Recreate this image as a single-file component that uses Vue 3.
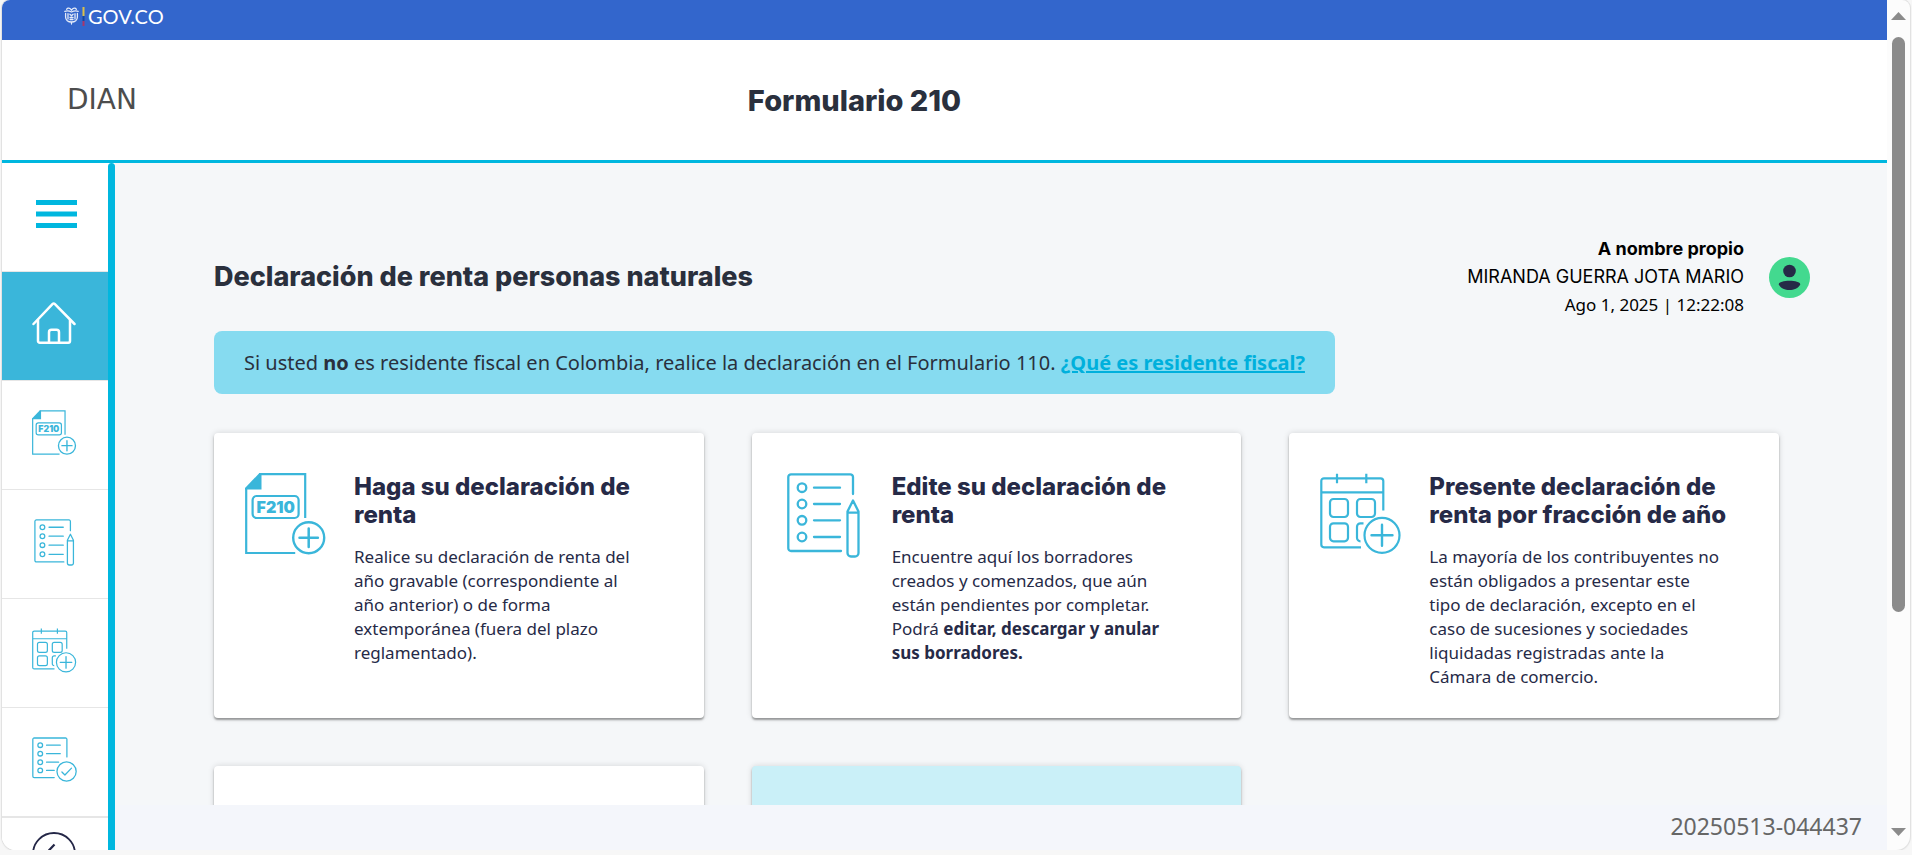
<script setup>
const navItems = [
  { icon: 'form', label: 'Haga su declaración de renta' },
  { icon: 'edit', label: 'Edite su declaración de renta' },
  { icon: 'calendar', label: 'Presente declaración de renta por fracción de año' },
  { icon: 'check', label: 'Declaraciones presentadas' },
]

const cards = [
  {
    icon: 'form',
    title: 'Haga su declaración de\nrenta',
    text: 'Realice su declaración de renta del\naño gravable (correspondiente al\naño anterior) o de forma\nextemporánea (fuera del plazo\nreglamentado).',
    strong: [],
  },
  {
    icon: 'edit',
    title: 'Edite su declaración de\nrenta',
    text: 'Encuentre aquí los borradores\ncreados y comenzados, que aún\nestán pendientes por completar.\nPodrá ',
    strong: ['editar, descargar y anular', 'sus borradores.'],
  },
  {
    icon: 'calendar',
    title: 'Presente declaración de\nrenta por fracción de año',
    text: 'La mayoría de los contribuyentes no\nestán obligados a presentar este\ntipo de declaración, excepto en el\ncaso de sucesiones y sociedades\nliquidadas registradas ante la\nCámara de comercio.',
    strong: [],
  },
]
</script>

<template>
  <div class="window">
    <svg class="sprite" aria-hidden="true">
      <symbol id="icon-form" viewBox="0 0 82 85">
        <path d="M0 15 14 0.5h2.5v16H0z" fill="currentColor" />
        <path d="M14 1.2h46.2V45M1.2 15v65h49" fill="none" stroke="currentColor" stroke-width="2.2" />
        <rect x="7.6" y="23" width="46" height="22" rx="4" fill="none" stroke="currentColor" stroke-width="2.2" />
        <text x="30.7" y="39.8" text-anchor="middle" font-family="Inter, sans-serif" font-weight="900" font-size="16" fill="currentColor">F210</text>
        <circle cx="63.7" cy="64.7" r="15.5" fill="none" stroke="currentColor" stroke-width="2.4" />
        <path d="M54.5 64.7h18.4M63.7 55.5v18.4" fill="none" stroke="currentColor" stroke-width="2.5" stroke-linecap="round" />
      </symbol>
      <symbol id="icon-edit" viewBox="0 0 82 85">
        <g fill="none" stroke="currentColor" stroke-width="2.3" stroke-linecap="round" stroke-linejoin="round">
          <path d="M70 21V4a2.700 2.700 0 0 0-2.700-2.700H8A2.700 2.700 0 0 0 5.300 4v71.300A2.700 2.700 0 0 0 8 78h50" />
          <circle cx="19" cy="14.700" r="4.300" />
          <circle cx="19" cy="31" r="4.300" />
          <circle cx="19" cy="47.300" r="4.300" />
          <circle cx="19" cy="64" r="4.300" />
          <path d="M31 14.700h26M31 31h26M31 47.300h26M31 64h26" />
          <path d="M64.500 38.500 70 27.500l5.500 11V80a3.500 3.500 0 0 1-3.500 3.500h-4a3.500 3.500 0 0 1-3.500-3.500zM64.500 39.700h11" />
        </g>
      </symbol>
      <symbol id="icon-calendar" viewBox="0 0 82 85">
        <g fill="none" stroke="currentColor" stroke-width="2.2" stroke-linecap="butt" stroke-linejoin="round">
          <path d="M63.300 37.500V8a2.700 2.700 0 0 0-2.700-2.700H4A2.700 2.700 0 0 0 1.300 8v63.600A2.700 2.700 0 0 0 4 74.300h37M1.300 19.300h62M17 .7v9.600M46.300.7v9.600" />
          <rect x="10" y="26" width="18" height="18" rx="3.500" />
          <rect x="37" y="26" width="18" height="18" rx="3.500" />
          <rect x="10" y="50.300" width="18" height="18" rx="3.500" />
          <path d="M43.500 50.300h-3a3.500 3.500 0 0 0-3.500 3.500v11a3.500 3.500 0 0 0 3.500 3.500" />
          <circle cx="62" cy="62.300" r="17.500" />
          <path d="M51.500 62.300h21M62 51.800v21" stroke-width="2.400" stroke-linecap="round" />
        </g>
      </symbol>
      <symbol id="icon-check" viewBox="0 0 82 85">
        <g fill="none" stroke="currentColor" stroke-width="2.300" stroke-linecap="round" stroke-linejoin="round">
          <path d="M63.600 36V4a2.500 2.500 0 0 0-2.500-2.500H4A2.500 2.500 0 0 0 1.500 4v67A2.500 2.500 0 0 0 4 73.500h36.500" />
          <circle cx="15" cy="14.500" r="4.300" />
          <circle cx="15" cy="30" r="4.300" />
          <circle cx="15" cy="45.500" r="4.300" />
          <circle cx="15" cy="60.500" r="4.300" />
          <path d="M26.500 14.500h25M26.500 30h25M26.500 45.500h22M26.500 60.500h14" />
          <circle cx="63" cy="62.500" r="17.500" />
          <path d="m54.500 63.500 5.500 5.500 12-12.500" />
        </g>
      </symbol>
    </svg>

    <div class="page">
      <div class="gov-bar">
        <a class="gov-logo" href="#" aria-label="GOV.CO">
          <svg width="24" height="20" viewBox="0 0 24 20" aria-hidden="true">
            <g fill="none" stroke="#e4ebf9" stroke-width="1.3" stroke-linecap="round" stroke-linejoin="round">
              <path d="M7.500 4.200C6 1.800 3.600 1.600 2.600 3.300M7.500 4.200c1.500-2.400 3.900-2.600 4.900-.9" />
              <path d="M.8 5.300c2.200-.6 4.500-.4 6.700.7 2.200-1.100 4.500-1.300 6.700-.7" />
              <path d="M1.600 7.500v3.600c0 2.900 2.400 4.900 5.900 4.900s5.900-2 5.900-4.900V7.500" />
              <path d="M4 7.700v5.400M11 7.700v5.400M5.900 8.300l1.600 1.500 1.600-1.500M6 11.500h3M6 13.500h3M7.500 16.300v1.700" />
            </g>
            <path d="M19.500 1v9" stroke="#d9c04a" stroke-width="2" />
            <path d="M19.500 10v5" stroke="#16489e" stroke-width="2" />
            <path d="M19.500 15v5" stroke="#a8366a" stroke-width="2" />
          </svg>
          <span>GOV.CO</span>
        </a>
      </div>

      <header class="header">
        <a class="dian" href="#">DIAN</a>
        <h1>Formulario 210</h1>
      </header>

      <div class="body">
        <nav class="sidebar" aria-label="Menú principal">
          <button class="nav-item menu" type="button" aria-label="Menú">
            <svg width="41" height="28" viewBox="0 0 41 28" aria-hidden="true">
              <path d="M0 2.500h41M0 14h41M0 25.500h41" stroke="currentColor" stroke-width="4.800" />
            </svg>
          </button>
          <a class="nav-item active" href="#" aria-label="Inicio" aria-current="page">
            <svg width="44" height="42" viewBox="0 0 44 42" aria-hidden="true">
              <g fill="none" stroke="currentColor" stroke-width="2.500" stroke-linecap="round" stroke-linejoin="round">
                <path d="M1.500 22 20.700 1.900a1.400 1.400 0 0 1 2 0L42.500 22" />
                <path d="M6 18v21a1.700 1.700 0 0 0 1.700 1.700h28.600A1.700 1.700 0 0 0 38 39V18" />
                <path d="M17 40.500V30.200a2.500 2.500 0 0 1 2.500-2.500h5a2.500 2.500 0 0 1 2.500 2.500v10.300" />
              </g>
            </svg>
          </a>
          <a v-for="item in navItems" :key="item.icon" class="nav-item" href="#" :aria-label="item.label">
            <svg class="nav-icon" aria-hidden="true"><use :href="'#icon-' + item.icon" /></svg>
          </a>
          <button class="nav-back" type="button" aria-label="Volver">
            <svg width="44" height="44" viewBox="0 0 44 44" aria-hidden="true">
              <g fill="none" stroke="currentColor" stroke-width="1.800">
                <circle cx="22" cy="22" r="21" />
                <path d="m22.500 12.500-9 9.500 9 9.500" stroke-width="2.200" />
              </g>
            </svg>
          </button>
        </nav>
        <div class="strip"></div>

        <div class="content">
          <main class="scroll">
            <div class="top">
              <h2>Declaración de renta personas naturales</h2>
              <div class="user">
                <div class="user-text">
                  <strong>A nombre propio</strong>
                  <span>MIRANDA GUERRA JOTA MARIO</span>
                  <span class="date">Ago 1, 2025 | 12:22:08</span>
                </div>
                <svg width="41" height="41" viewBox="0 0 41 41" aria-hidden="true">
                  <circle cx="20.500" cy="20.500" r="20.500" fill="#43d98f" />
                  <circle cx="20.500" cy="14" r="6.300" fill="#262a47" />
                  <path d="M9.700 27.500c0-5 21.600-5 21.600 0-4 7.400-17.600 7.400-21.600 0z" fill="#262a47" />
                </svg>
              </div>
            </div>

            <p class="notice">
              Si usted <strong>no</strong> es residente fiscal en Colombia, realice la declaración en el Formulario 110.
              <a href="#">¿Qué es residente fiscal?</a>
            </p>

            <div class="cards">
              <article v-for="card in cards" :key="card.icon" class="card">
                <svg class="card-icon" aria-hidden="true"><use :href="'#icon-' + card.icon" /></svg>
                <div class="card-body">
                  <h3>{{ card.title }}</h3>
                  <p>{{ card.text }}<template v-for="(line, i) in card.strong" :key="line">{{ i ? '\n' : '' }}<strong>{{ line }}</strong></template></p>
                </div>
              </article>
              <article class="card"></article>
              <article class="card tinted"></article>
            </div>
          </main>
          <footer class="footer">20250513-044437</footer>
        </div>
      </div>
    </div>

    <div class="scrollbar" aria-hidden="true">
      <svg width="15" height="8" viewBox="0 0 15 8"><path d="M0 8 7.500 0 15 8z" fill="#8b8b8b" /></svg>
      <div class="track"><div class="thumb"></div></div>
      <svg width="15" height="8" viewBox="0 0 15 8"><path d="M0 0h15L7.500 8z" fill="#8b8b8b" /></svg>
    </div>
  </div>
</template>

<style>
body {
  background: #f7f7f7;
}
</style>

<style scoped>
.window {
  box-sizing: border-box;
  display: flex;
  height: calc(100vh - 5px);
  margin: 0 2px;
  overflow: hidden;
  border-radius: 8px 8px 14px 14px;
  background: #fcfcfc;
  box-shadow: 0 0 0 1px #e2e2e2, 0 1px 2px #d4d4d4;
  font-family: 'Noto Sans', 'Open Sans', sans-serif;
  color: #262a47;
}

.sprite {
  display: none;
}

.page {
  flex: 1;
  min-width: 0;
  display: flex;
  flex-direction: column;
  background: #fff;
}

.gov-bar {
  flex: none;
  display: flex;
  height: 40px;
  padding-left: 62px;
  background: #3366cc;
}

.gov-logo {
  display: flex;
  align-items: center;
  height: 32px;
  color: #fff;
  font-family: Lato, sans-serif;
  font-size: 20px;
  text-decoration: none;
}

.header {
  flex: none;
  display: grid;
  grid-template-columns: 240px 1fr 420px;
  align-items: center;
  height: 120px;
  border-bottom: 3px solid #00b7df;
}

.dian {
  padding-left: 65px;
  color: #4d4d4d;
  font-family: 'DejaVu Sans', sans-serif;
  font-size: 28px;
  line-height: 32px;
  text-decoration: none;
}

h1 {
  margin: 0;
  padding-top: 2px;
  color: #2a303d;
  font-family: Inter, sans-serif;
  font-size: 29px;
  font-weight: 800;
  line-height: 36px;
  text-align: center;
}

.body {
  flex: 1;
  min-height: 0;
  display: flex;
}

.sidebar {
  flex: none;
  width: 106px;
  overflow: hidden;
}

.nav-item {
  box-sizing: border-box;
  display: flex;
  align-items: center;
  justify-content: center;
  width: 100%;
  height: 109px;
  padding: 0 2px 4px 0;
  border: 0;
  border-bottom: 1px solid #e6e6e6;
  background: #fff;
  color: #3ab6da;
}

.nav-item.menu {
  padding: 0 0 6px 3px;
  color: #00b7df;
}

.nav-item.active {
  padding-bottom: 7px;
  background: #3ab6da;
  color: #fff;
}

.nav-icon {
  width: 45px;
  height: 47px;
}

.nav-back {
  display: flex;
  justify-content: center;
  width: 100%;
  padding: 14px 2px 14px 0;
  border: 0;
  border-top: 1px solid #e6e6e6;
  background: #fff;
  color: #242747;
}

.strip {
  flex: none;
  width: 7px;
  border-radius: 4px 4px 0 0;
  background: #00b7df;
}

.content {
  flex: 1;
  min-width: 0;
  display: flex;
  flex-direction: column;
  background: #f5f7f9;
}

.scroll {
  flex: 1;
  min-height: 0;
  padding: 72px 108px 0 99px;
  overflow: hidden;
}

.top {
  display: flex;
  align-items: center;
  justify-content: space-between;
  margin-right: -31px;
}

h2 {
  margin: 0;
  color: #2a303d;
  font-family: Inter, sans-serif;
  font-size: 27px;
  font-weight: 800;
  line-height: 36px;
}

.user {
  display: flex;
  align-items: center;
  gap: 25px;
  color: #000;
}

.user-text {
  display: flex;
  flex-direction: column;
  align-items: flex-end;
  font-family: Inter, sans-serif;
  font-size: 18px;
  line-height: 28px;
}

.date {
  font-family: 'Noto Sans', sans-serif;
  font-size: 17px;
}

.notice {
  width: fit-content;
  margin: 12px 0 0;
  padding: 17px 30px 16px;
  border-radius: 8px;
  background: #86dbf0;
  color: #2a303d;
  font-size: 20px;
  line-height: 30px;
}

.notice a {
  color: #00b0dc;
  font-weight: 700;
  text-decoration-thickness: 2px;
}

.cards {
  display: grid;
  grid-template-columns: repeat(3, 1fr);
  gap: 48px;
  margin-top: 39px;
}

.card {
  box-sizing: border-box;
  display: flex;
  gap: 27px;
  min-height: 285px;
  padding: 40px 30px 28px 31px;
  border-radius: 4px;
  background: #fff;
  box-shadow: 0 2px 2px rgba(0, 0, 0, 0.35), 0 0 6px rgba(0, 0, 0, 0.14);
}

.card.tinted {
  background: #caf0f8;
}

.card-icon {
  flex: none;
  width: 82px;
  height: 85px;
  color: #3ab6da;
}

.card-body {
  white-space: pre-line;
}

h3 {
  margin: 0 0 16px;
  font-family: Inter, sans-serif;
  font-size: 24px;
  font-weight: 800;
  line-height: 28px;
}

.card-body p {
  margin: 0;
  font-size: 17px;
  line-height: 24px;
}

.footer {
  flex: none;
  padding: 5px 25px 8px;
  background: #f4f6fb;
  color: #666;
  font-size: 23px;
  line-height: 32px;
  text-align: right;
}

.scrollbar {
  box-sizing: border-box;
  flex: none;
  display: flex;
  flex-direction: column;
  align-items: center;
  justify-content: space-between;
  width: 23px;
  padding: 12px 0 14px;
}

.track {
  flex: 1;
  width: 13px;
  margin: 17px 0 14px;
}

.thumb {
  height: 74%;
  border-radius: 7px;
  background: #8b8b8b;
}
</style>
